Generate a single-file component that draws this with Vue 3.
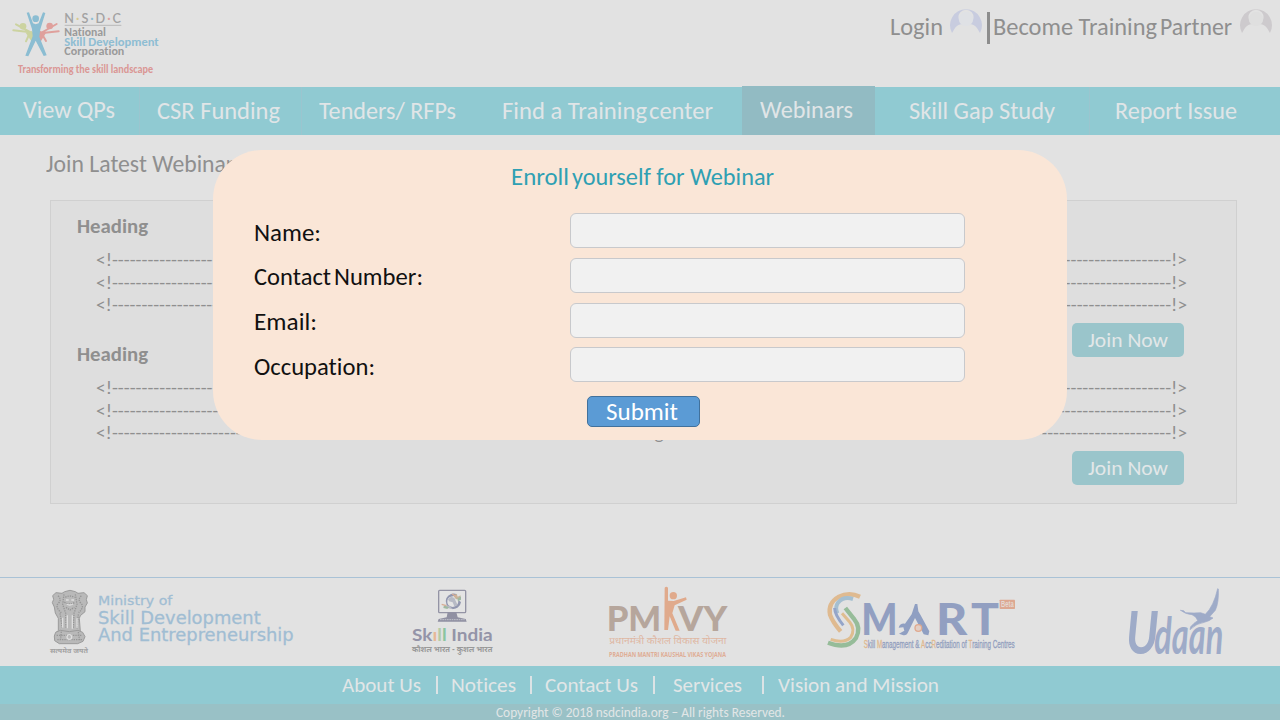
<script setup>
// Condenses a text run horizontally so that it takes the given width in pixels.
const vFit = {
  mounted(el, { value }) {
    const range = document.createRange()
    range.selectNodeContents(el)
    const natural = range.getBoundingClientRect().width
    el.style.width = value + 'px'
    el.style.transform = `scaleX(${value / natural})`
  }
}
const nav = [
  { parts: [['View QPs', 92]], cls: 'up' },
  { parts: [['CSR Funding', 123]], cls: 'line csr' },
  { parts: [['Tenders/ RFPs', 137]], cls: 'line' },
  { parts: [['Find a Training', 145], ['center', 64]], cls: '' },
  { parts: [['Webinars', 93]], cls: 'active' },
  { parts: [['Skill Gap Study', 146]], cls: 'gap' },
  { parts: [['Report Issue', 122]], cls: 'line last' }
]
const fields = [
  { parts: [['Name:', 67]] },
  { parts: [['Contact', 77], ['Number:', 89]] },
  { parts: [['Email:', 63]] },
  { parts: [['Occupation:', 121]] }
]
const links = [
  { text: 'About Us', w: 79, cls: 'l1' },
  { text: 'Notices', w: 65, cls: 'l2' },
  { text: 'Contact Us', w: 93, cls: 'l3' },
  { text: 'Services', w: 69, cls: 'l4' },
  { text: 'Vision and Mission', w: 161, cls: 'l5' }
]
const plain = '<!' + '-'.repeat(179) + '!>'
const titled = '<!' + '-'.repeat(83) + 'Training' + '-'.repeat(86) + '!>'
const rows = [plain, plain, titled]
</script>

<template>
  <div class="page">
    <header class="top">
      <svg class="brand" viewBox="0 0 540 261">
        <g fill="none" stroke-linecap="round">
          <path d="M40 91l52 6M48 73l40 22M88 102l-10 22" stroke="#ccd3a0" stroke-width="6" />
          <path d="M176 94l-48 5M170 72l-42 24M126 102l12 21" stroke="#dfa09c" stroke-width="6" />
        </g>
        <circle cx="69" cy="79" r="10" fill="#ccd3a0" />
        <circle cx="149" cy="78" r="10" fill="#dfa09c" />
        <path d="M77 98l17-5 14 10-4 22-8 2z" fill="#ccd3a0" />
        <path d="M138 98l-17-5-12 10 2 22 10 2z" fill="#dfa09c" />
        <circle cx="107" cy="56" r="10" fill="#8bbdd2" />
        <path d="M80 38l7-1 12 33q8 5 17 0l13-33 7 2-15 49-3 22 22 56-9 2-24-46-22 47-9-2 22-58-2-22z" fill="#8bbdd2" />
        <text x="193" y="69" font-size="38" textLength="170" class="nsdc">N<tspan fill="#d9ca8f">·</tspan>S<tspan fill="#8bbdd2">·</tspan>D<tspan fill="#dfa09c">·</tspan>C</text>
        <path d="M194 76H364" stroke="#a5a5a5" stroke-width="2" />
        <g class="brandtext">
          <text x="193" y="108" font-size="37" textLength="125" lengthAdjust="spacingAndGlyphs">National</text>
          <text x="193" y="137" font-size="37" textLength="283" lengthAdjust="spacingAndGlyphs" class="sky">Skill Development</text>
          <text x="193" y="166" font-size="37" textLength="180" lengthAdjust="spacingAndGlyphs">Corporation</text>
          <text x="54" y="219" font-size="33" textLength="405" lengthAdjust="spacingAndGlyphs" class="tag">Transforming the skill landscape</text>
        </g>
      </svg>
      <div class="account">
        <span v-fit="53" class="t">Login</span>
        <svg class="avatar a1" viewBox="0 0 34 30">
          <path d="M3 28A16 16 0 1 1 31 28L28 23Q25 19 20 19A7.5 7.5 0 1 0 14 19Q9 19 6 23Z" fill="#c8ccdf" />
          <circle cx="17" cy="14" r="7.2" fill="#dfe1e5" />
        </svg>
        <i class="bar"></i>
        <span v-fit="164" class="t">Become Training</span>
        <span v-fit="72" class="t partner">Partner</span>
        <svg class="avatar a2" viewBox="0 0 34 30">
          <path d="M3 28A16 16 0 1 1 31 28L28 23Q25 19 20 19A7.5 7.5 0 1 0 14 19Q9 19 6 23Z" fill="#cdcacd" />
          <circle cx="17" cy="14" r="7.2" fill="#dfdfdf" />
        </svg>
      </div>
    </header>

    <nav class="nav">
      <a v-for="(n, i) in nav" :key="i" :class="n.cls"><span v-for="p in n.parts" :key="p[0]" v-fit="p[1]" class="t">{{ p[0] }}</span></a>
    </nav>

    <main class="main">
      <h1><span v-fit="197" class="t">Join Latest Webinars</span></h1>
      <section class="list">
        <article v-for="k in 2" :key="k">
          <h2><span v-fit="71" class="t">Heading</span></h2>
          <div v-for="(r, j) in rows" :key="j" class="row"><span v-fit="1091" class="t">{{ r }}</span></div>
          <button class="join"><span v-fit="80" class="t">Join Now</span></button>
        </article>
      </section>
    </main>

    <section class="partners">
      <svg class="ministry" viewBox="0 0 840 255">
        <g fill="#b9b9b9" stroke="#9b9b9b" stroke-width="3">
          <path d="M68 47l10-9 18 2 8-5 16-4 16 4 8 5 18-2 10 9-3 12 3 10-7 12 0 14-14 12-3 8 3 40 6 7-4 6-58 1-14-3-2-9 6-6 0-36-9-16-3-18-6-13 4-10z" />
          <path d="M77 157l14-6 27 4 26-4 14 6 7 13-6 14-16 7H88l-14-9-1-14z" />
        </g>
        <g fill="none" stroke="#969696" stroke-width="4" stroke-dasharray="4 3">
          <path d="M84 47q12 12 1 23t9 28M154 47q-12 12-1 23t-7 28M102 43l-4 30 9 27 1 44M136 43l5 30-9 27-2 44" />
          <path d="M106 52q13-8 28 0M103 66q16 12 33 0M108 82l12 8 13-8M90 100l7 44M145 103l-4 43M80 166h76M82 179h74M94 155l-3 28M145 156l4 26" />
        </g>
        <g fill="none" stroke="#dedede" stroke-width="4">
          <path d="M112 106v39M127 106v40M98 113v30M141 115v28M108 60h8M124 60h8M110 72q9 6 19 0" />
          <circle cx="118" cy="171" r="7" />
        </g>
        <text x="60" y="220" font-size="21" textLength="114" lengthAdjust="spacingAndGlyphs" class="deva bold" fill="#a2a2a2">सत्यमेव जयते</text>
        <g class="verdana">
          <text x="204" y="74" font-size="39" textLength="223" lengthAdjust="spacingAndGlyphs">Ministry of</text>
          <text x="204" y="131" font-size="52" textLength="488" lengthAdjust="spacingAndGlyphs">Skill Development</text>
          <text x="204" y="184" font-size="52" textLength="587" lengthAdjust="spacingAndGlyphs">And Entrepreneurship</text>
        </g>
      </svg>

      <svg class="skill" viewBox="0 0 360 255">
        <rect x="146" y="31" width="81" height="67" rx="3" fill="#e4e4e4" stroke="#9494a5" stroke-width="4" />
        <path d="M173 97h26l4 15 24 5 3 8h-87l3-8 24-5z" fill="#9090a2" />
        <path d="M150 119h74" stroke="#bfc0ca" stroke-width="3" stroke-dasharray="5 2" />
        <path d="M202 44a23 23 0 1 0 11 22l-8-5q1 17-17 20-18-3-16-19 2-12 17-13z" fill="#9196af" />
        <path d="M174 57l10-7 9 4 10 22-10 3-5-12-11-3zM164 75l15 3 10 10-14-3z" fill="#b7bac5" />
        <path d="M190 47l10-6 3 9 9-4-2 10-12 2z" fill="#c6b49b" />
        <path d="M202 56l11-7v10l-9 5zM162 76l15 6-5 5-12-3z" fill="#9eb8a2" />
        <path d="M155 73l14 4M186 42l14 8" stroke="#d8ae95" stroke-width="4" />
        <text x="66" y="182" font-size="52" textLength="242" lengthAdjust="spacingAndGlyphs" class="skilltext">Sk<tspan fill="#e7b897">ı</tspan><tspan fill="#b5cba5">l</tspan><tspan fill="#8cc5a0">l</tspan> India</text>
        <text x="66" y="217" font-size="24" textLength="241" lengthAdjust="spacingAndGlyphs" class="deva bold" fill="#999">कौशल भारत - कुशल भारत</text>
      </svg>

      <svg class="pmkvy" viewBox="600 0 450 255">
        <g class="pmtext">
          <text x="650" y="153" font-size="101" textLength="164" lengthAdjust="spacingAndGlyphs">PM</text>
          <text x="864" y="153" font-size="101" textLength="148" lengthAdjust="spacingAndGlyphs">VY</text>
        </g>
        <g fill="#e0aa8c">
          <circle cx="850" cy="47" r="11" />
          <path d="M824 23q5-5 10 0v39l17 1 37-11 2 7-36 17-7 24 22 52h-12l-18-43-5 41h-11z" />
        </g>
        <text x="658" y="193" font-size="28" textLength="351" lengthAdjust="spacingAndGlyphs" class="deva" fill="#dfb7a3">प्रधानमंत्री कौशल विकास योजना</text>
        <text x="657" y="231" font-size="20" textLength="351" lengthAdjust="spacingAndGlyphs" class="pm-sub">PRADHAN MANTRI KAUSHAL VIKAS YOJANA</text>
      </svg>

      <svg class="smart" viewBox="0 0 660 255">
        <g fill="none">
          <path d="M150 50Q117 35 85 51Q53 70 60 104Q68 126 92 154" stroke="#dfba90" stroke-width="13" />
          <path d="M129 57Q100 48 84 68Q74 82 82 100" stroke="#a5bfd0" stroke-width="12" />
          <path d="M74 84Q74 104 100 136" stroke="#94a5c9" stroke-width="9" />
          <path d="M106 84L133 118Q154 143 138 174Q113 210 54 188" stroke="#96bc99" stroke-width="13" />
          <path d="M96 100L119 126Q137 148 122 172Q102 192 62 178" stroke="#dfbd90" stroke-width="9" />
        </g>
        <g class="smarttext">
          <text x="154" y="165" font-size="130" textLength="109" lengthAdjust="spacingAndGlyphs">M</text>
          <text x="378" y="165" font-size="130" textLength="94" lengthAdjust="spacingAndGlyphs">R</text>
          <text x="483" y="165" font-size="130" textLength="84" lengthAdjust="spacingAndGlyphs">T</text>
        </g>
        <path d="M315 72h7l3 22 7 12 26 48-3 12-14-3-26-49-20 41q-5 13-17 10l-11-4 16-9-3-10-14 1q4-14 19-12l20-28z" fill="#8f9fc2" />
        <circle cx="325" cy="144" r="10" fill="#e3cfc5" stroke="#e0a98e" stroke-width="4" />
        <rect x="569" y="59" width="46" height="28" rx="2" fill="#dda891" />
        <text x="573" y="81" font-size="25" textLength="38" lengthAdjust="spacingAndGlyphs" class="beta">Beta</text>
        <text x="161" y="205" font-size="35" textLength="453" lengthAdjust="spacingAndGlyphs" class="smart-sub"><tspan class="o">S</tspan>kill <tspan class="o">M</tspan>anagement &amp; <tspan class="o">A</tspan>cc<tspan class="o">R</tspan>editation of <tspan class="o">T</tspan>raining Centres</text>
      </svg>

      <svg class="udaan" viewBox="0 0 390 255">
        <g class="udaantext">
          <text x="48" y="222" font-size="178" textLength="98" lengthAdjust="spacingAndGlyphs">U</text>
          <text x="133" y="222" font-size="154" textLength="207" lengthAdjust="spacingAndGlyphs">daan</text>
        </g>
        <path d="M211 91l10 1 6 6 25 1 20-1 14 5q25-24 37-77l2 1q2 40-9 64l-17 19 10 4-12 8-14 5q-22 2-43 22l2-9q9-11 21-18-3-12-17-18-20-1-34-13z" fill="#9eabc8" stroke="#9eabc8" stroke-width="2" />
      </svg>
    </section>

    <footer>
      <div class="links">
        <a v-for="l in links" :key="l.text" :class="l.cls"><span v-fit="l.w" class="t">{{ l.text }}</span></a>
      </div>
      <div class="copy"><span v-fit="289" class="t">Copyright © 2018 nsdcindia.org – All rights Reserved.</span></div>
    </footer>

    <form class="dialog" @submit.prevent>
      <h3><span v-fit="58" class="t">Enroll</span><span v-fit="202" class="t second">yourself for Webinar</span></h3>
      <label v-for="(f, i) in fields" :key="i">
        <span class="name"><span v-for="p in f.parts" :key="p[0]" v-fit="p[1]" class="t">{{ p[0] }}</span></span>
        <input type="text" />
      </label>
      <button class="submit"><span v-fit="72" class="t">Submit</span></button>
    </form>
  </div>
</template>

<style>
body { background: #e2e2e2; }
</style>

<style scoped>
* { box-sizing: border-box; }
.page { position: relative; width: 1280px; height: 720px; overflow: hidden; background: #e2e2e2; color: #8f8f8f; font-family: Carlito, Lato, "Liberation Sans", sans-serif; font-size: 24px; font-variant-ligatures: none; display: flex; flex-direction: column; }
.t { display: inline-block; white-space: nowrap; transform-origin: left center; text-align: left; }
h1, h2, h3 { margin: 0; font-weight: 400; font-size: inherit; }
button { font-family: inherit; padding: 0; border: 0; }

.top { height: 87px; flex: none; display: flex; justify-content: space-between; }
.brand { width: 180px; height: 87px; }
.nsdc { font-family: Lato, sans-serif; fill: #a2a2a2; font-weight: 600; }
.brandtext { font-weight: 700; fill: #9a9a9a; }
.sky { fill: #8ebdd3; }
.tag { fill: #da9694; }
.account { display: flex; height: 54px; align-items: center; padding-right: 7px; }
.account .t { margin-bottom: 2px; }
.partner { margin-left: 3px; }
.second { margin-left: 3px; }
.avatar { width: 34px; height: 30px; margin-bottom: 14px; }
.a1 { margin-left: 6px; }
.a2 { margin-left: 7px; }
.bar { width: 3px; height: 32px; background: #8d8d8d; margin: 2px 3px 0 4px; }

.nav { height: 48px; flex: none; display: grid; grid-template-columns: 139px 162px 172px 269px 133px 214px 191px; background: #90cad2; color: #e0e5e7; }
.nav a { display: flex; align-items: center; justify-content: center; gap: 2px; padding-bottom: 2px; }
.nav .up { padding: 0 2px 4px 0; }
.nav .csr { padding-right: 4px; }
.nav .gap { padding-right: 1px; }
.nav .line { border-left: 1px solid #9bc5cf; }
.nav .last { padding-right: 19px; }
.nav .active { background: #92bbc3; margin-top: -1px; padding: 0 4px 3px 0; }

.main { height: 442px; flex: none; padding: 15px 43px 0 45px; }
.main h1 { height: 50px; line-height: 28px; padding-left: 1px; }
.list { margin-left: 5px; width: 1187px; height: 304px; background: #dedede; border: 1px solid #d0d0d0; padding: 11px 52px 0 26px; }
article { height: 128px; display: flex; flex-direction: column; }
h2 { font-weight: 700; font-size: 20px; line-height: 28px; height: 37px; flex: none; }
.row { height: 22.6px; line-height: 22.6px; padding-left: 19px; display: flex; font-size: 19.3px; width: 1110px; flex: none; }
.row:nth-child(2) { margin-top: 0; }
.join { align-self: flex-end; flex: none; width: 112px; height: 34px; margin-top: 6px; border-radius: 5px; background: #9ac5cb; color: #e2e7e8; font-size: 20.5px; }
h2 { margin-bottom: 0; padding-bottom: 0; }
h2 + .row { margin-top: 0; }

.partners { height: 89px; flex: none; border-top: 1px solid #a9c2d6; padding: 2px 0 0 30px; display: flex; }
.partners svg { height: 85px; flex: none; }
.ministry { width: 280px; }
.skill { width: 120px; margin-left: 80px; }
.pmkvy { width: 150px; margin-left: 80px; }
.smart { width: 220px; margin-left: 70px; }
.udaan { width: 130px; margin-left: 80px; }
.verdana { font-family: "DejaVu Sans", sans-serif; fill: #a0bdd3; stroke: #a0bdd3; stroke-width: .8; }
.deva { font-family: "Noto Sans Devanagari", "Noto Sans", sans-serif; }
.bold { font-weight: 700; }
.skilltext { font-family: Lato, sans-serif; font-weight: 700; fill: #9494a8; }
.pmtext { font-family: Lato, sans-serif; font-weight: 900; fill: #b6a69c; }
.pm-sub { font-family: "Open Sans", sans-serif; font-weight: 700; fill: #dfad95; }
.smarttext { font-family: Lato, sans-serif; font-weight: 900; fill: #929fc1; }
.beta { font-family: "Liberation Sans", sans-serif; fill: #e4d8d3; font-weight: 700; }
.smart-sub { font-family: "Liberation Sans", sans-serif; fill: #929fbe; stroke: #929fbe; stroke-width: 1; }
.o { fill: #dfb88d; stroke: #dfb88d; }
.udaantext { font-family: Lato, sans-serif; font-style: italic; font-weight: 700; fill: #9eabc8; }

footer { flex: none; height: 54px; color: #e1e6e7; }
.links { height: 38px; background: #90cad2; display: flex; align-items: center; padding-left: 342px; font-size: 20.5px; }
.links a { display: flex; align-items: center; }
.links a + a::before { content: ""; width: 2px; height: 18px; background: #dce3e5; margin-right: 13px; }
.links .l2 { margin-left: 15px; }
.links .l3 { margin-left: 14px; }
.links .l4 { margin-left: 15px; }
.links .l4::before { margin-right: 18px; }
.links .l5 { margin-left: 20px; }
.links .l5::before { margin-right: 14px; }
.copy { height: 16px; background: #99c1c6; line-height: 17px; display: flex; justify-content: center; font-size: 13.3px; }

.dialog { position: absolute; left: 213px; top: 150px; width: 854px; height: 290px; border-radius: 49px; background: #fae6d7; color: #111; padding-top: 13px; display: flex; flex-direction: column; }
h3 { color: #2fa0b3; line-height: 28px; height: 50px; padding-left: 298px; display: flex; }
.dialog label { height: 35px; margin-bottom: 9.8px; display: flex; align-items: center; padding-left: 40px; flex: none; }
.name { width: 317px; padding: 3px 0 0 1px; display: flex; gap: 3px; }
input { width: 395px; height: 35px; border: 1px solid #c8c9cc; border-radius: 6px; background: #f1f1f1; padding: 0 8px; font: inherit; }
.submit { width: 113px; height: 31px; margin: 4px 0 0 374px; border: 1px solid #41719c; border-radius: 5px; background: #5b9bd5; color: #fff; font-size: 24px; padding-right: 4px; flex: none; display: flex; align-items: center; justify-content: center; }
</style>
